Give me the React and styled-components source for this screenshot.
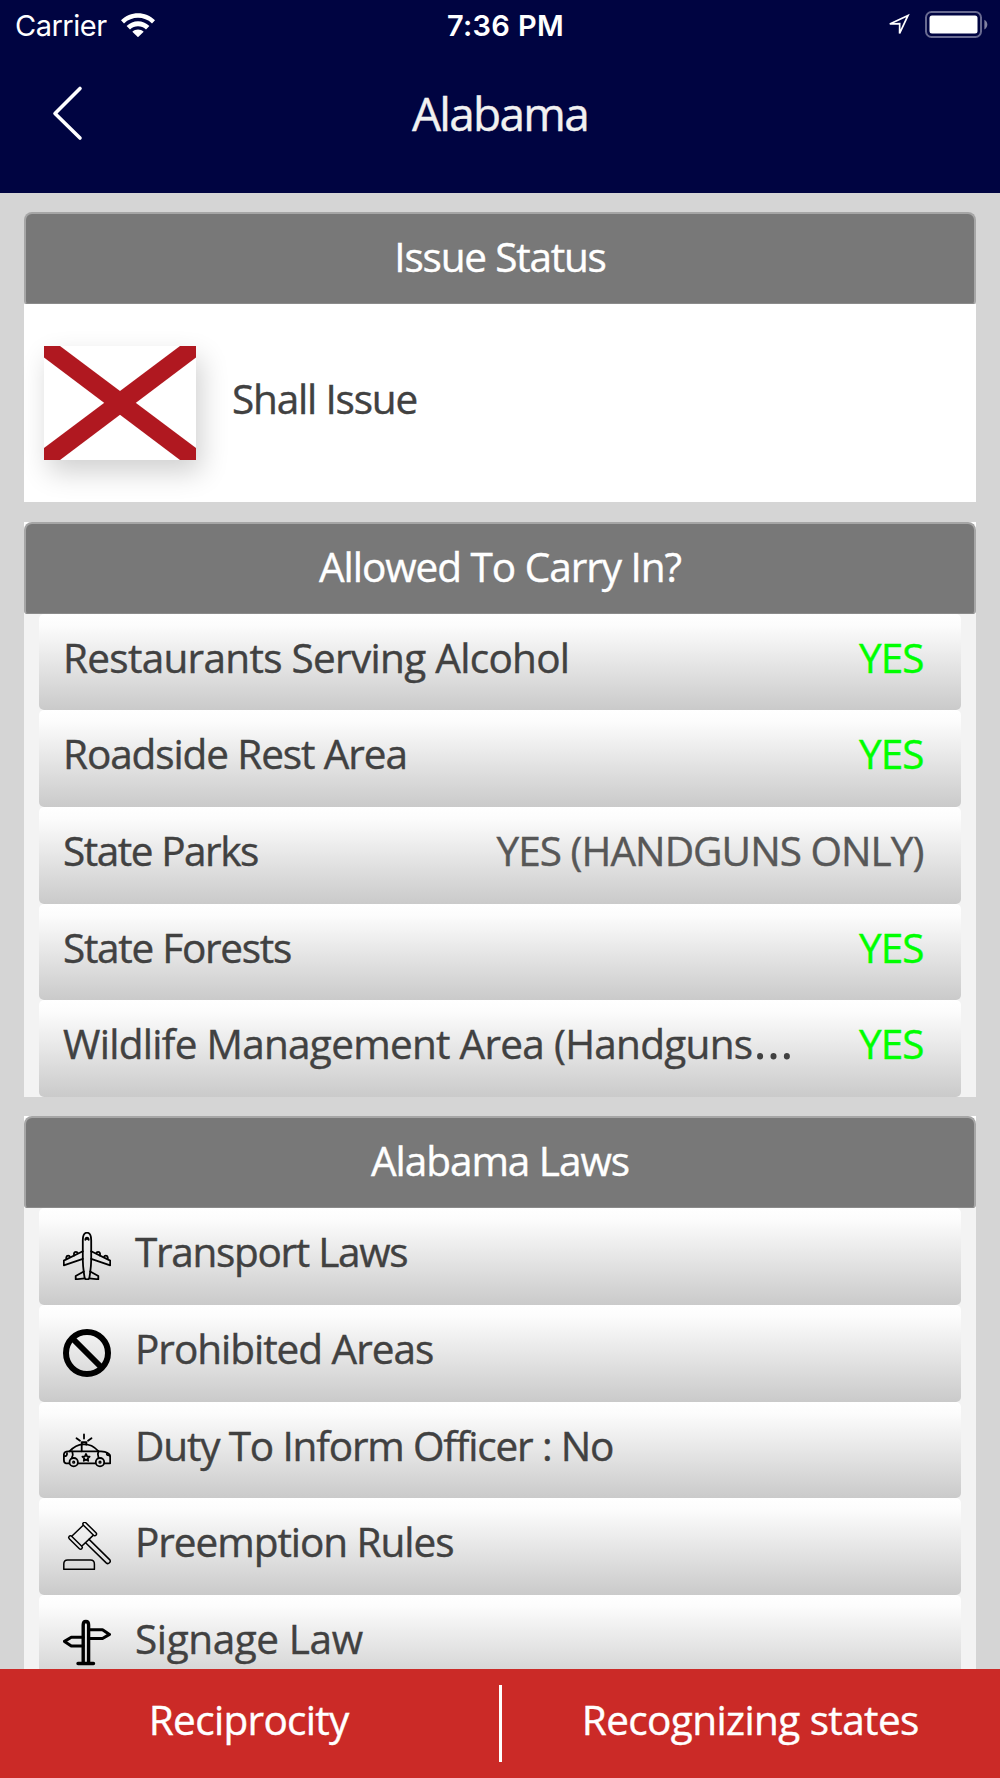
import React from 'react'
import styled, { createGlobalStyle } from 'styled-components'

const GlobalStyle = createGlobalStyle`
  body {
    margin: 0;
    background: #d5d5d5;
  }
  * {
    box-sizing: border-box;
  }
`

const Screen = styled.div`
  display: flex;
  flex-direction: column;
  width: 1000px;
  height: 1778px;
  overflow: hidden;
  background: #d5d5d5;
  font-family: "Open Sans", "Noto Sans", sans-serif;
  font-size: 40.5px;
  color: #414141;
  -webkit-text-stroke: 0.4px currentColor;
`

const Header = styled.header`
  flex: none;
  height: 193px;
  background: #000441;
  color: #fff;
`

const StatusBar = styled.div`
  display: grid;
  grid-template-columns: 1fr auto 1fr;
  align-items: center;
  height: 50px;
  padding: 1px 12px 0 15px;
  font-family: Inter, sans-serif;
  font-size: 29px;
  line-height: 50px;
  -webkit-text-stroke: 0;
`

const Carrier = styled.div`
  display: flex;
  align-items: center;
  gap: 14px;
  letter-spacing: -0.5px;
  svg {
    margin-top: -3px;
  }
`

const Clock = styled.div`
  margin-left: 8px;
  font-weight: 600;
  letter-spacing: 0.35px;
`

const Indicators = styled.div`
  display: flex;
  align-items: center;
  justify-content: flex-end;
  gap: 14px;
  svg {
    margin-top: -2px;
  }
`

const NavBar = styled.div`
  display: grid;
  grid-template-columns: 120px 1fr 120px;
  align-items: center;
  height: 126px;
`

const BackButton = styled.button`
  display: flex;
  margin: 0 0 0 50px;
  padding: 0;
  border: 0;
  background: none;
`

const Title = styled.h1`
  margin: 0;
  font-size: 46px;
  font-weight: 400;
  line-height: 64px;
  letter-spacing: -1.7px;
  text-align: center;
  color: #f1f1f1;
`

const Content = styled.main`
  flex: 1;
  min-height: 0;
  overflow: hidden;
  display: flex;
  flex-direction: column;
  gap: 19.5px;
  padding: 19.4px 24px 0;
`

const Section = styled.section`
  flex: none;
  background: ${props => props.$corner || 'transparent'};
`

const SectionTitle = styled.h2`
  height: 92px;
  margin: 0;
  padding-top: 14px;
  border: 2.5px solid #a6a6a6;
  border-bottom: 1px solid #8b8b8b;
  border-radius: 8px 8px 3px 3px;
  background: #787878;
  color: #fff;
  font-size: 40.5px;
  font-weight: 400;
  line-height: 58px;
  text-align: center;
  letter-spacing: ${props => props.$spacing}px;
`

const Status = styled.div`
  display: flex;
  align-items: center;
  height: 198px;
  padding-left: 19.5px;
  background: #fff;
`

const Flag = styled.svg`
  flex: none;
  width: 152px;
  height: 114px;
  background: #fff;
  box-shadow: 5px 12px 26px rgba(0, 0, 0, 0.19);
`

const StatusText = styled.span`
  margin: -8px 0 0 36.5px;
  line-height: 58px;
  letter-spacing: -1.18px;
`

const List = styled.div`
  padding: 0 15px;
  background: #f3f3f3;
`

const Row = styled.div`
  display: flex;
  height: 96.6px;
  padding: 15px 37.5px 0 23px;
  border-radius: 5px;
  background: linear-gradient(#fff 0%, #fcfcfc 12%, #cacaca 100%);
  line-height: 58px;
  white-space: nowrap;
`

const Label = styled.span`
  flex: 1;
  padding-left: ${props => (props.$plain ? 1 : 0)}px;
  letter-spacing: ${props => props.$spacing}px;
`

const Ellipsis = styled.span`
  margin-left: 1px;
  font-size: 52px;
  line-height: 0;
  -webkit-text-stroke: 0;
`

const Value = styled.span`
  letter-spacing: -0.95px;
  color: ${props => (props.$allowed ? '#00ff00' : '#575757')};
`

const RowIcon = styled.svg`
  flex: none;
  width: 48px;
  height: 48px;
  margin: 9px 24px 0 1px;
  fill: none;
  stroke: #000;
  stroke-width: ${props => props.$weight || 1.8};
  stroke-linecap: round;
  stroke-linejoin: round;
`

const Footer = styled.footer`
  flex: none;
  display: flex;
  align-items: center;
  height: 109px;
  background: #cb2a27;
`

const FooterButton = styled.button`
  flex: 1;
  padding: 0 1px 7px 0;
  border: 0;
  background: none;
  color: #fff;
  font: inherit;
  line-height: 58px;
  letter-spacing: ${props => props.$spacing}px;
  -webkit-text-stroke: 0.4px currentColor;
`

const Divider = styled.div`
  width: 3px;
  height: 77px;
  background: #fff;
`

const WifiIcon = () => (
  <svg width="34" height="24" viewBox="0 0 34 24" fill="#fff">
    <path d="M0 7.200C9-2.200 25-2.200 34 7.200L31 10.400C23 3 11 3 3 10.400z" />
    <path d="M5.600 13c6.500-6.300 16.300-6.300 22.800 0l-3.400 3.400c-4.500-4.200-11.500-4.200-16 0z" />
    <path d="M11.300 18.700c3.300-2.900 8.100-2.900 11.400 0L17 24.200z" />
  </svg>
)

const LocationIcon = () => (
  <svg width="25" height="25" viewBox="0 0 25 25" fill="none" stroke="#fff" strokeWidth="1.7" strokeLinejoin="miter">
    <path d="M22 2.400 3.800 11l9.900-.4L13.600 20.400z" />
  </svg>
)

const BatteryIcon = () => (
  <svg width="63" height="28" viewBox="0 0 63 28">
    <rect x="1" y="1" width="55" height="25" rx="5.5" fill="none" stroke="#686a90" strokeWidth="2" />
    <rect x="4.5" y="4.5" width="48" height="18" rx="2.5" fill="#fff" />
    <path d="M59.4 8.7c3.9 2 3.9 7.8 0 9.8z" fill="#8182a1" />
  </svg>
)

const PlaneIcon = () => (
  <RowIcon viewBox="0 0 48 48">
    <path d="M24 .7c-2.900 0-4.200 3.600-4.200 7.600V28c.1 7 1 12.800 1.900 18.300.5 1.400 4.100 1.400 4.600 0C27.200 40.800 28.100 35 28.200 28V8.300C28.200 4.300 26.900.7 24 .7z" />
    <path d="M22.300 7.800c.2-3 3.200-3 3.400 0M22.300 7.800l1.700-1.400 1.700 1.400" />
    <path d="M19.800 19.300.8 28.600v4.700l19-6.500M28.200 19.300l19 9.300v4.700l-19-6.500" />
    <path d="M3.300 27.200v-2c.5-2 3.300-2 3.700 0M11 23.500v-2.200c.5-2 3.300-2 3.700 0M44.700 27.200v-2c-.5-2-3.300-2-3.700 0M37 23.500v-2.200c-.5-2-3.300-2-3.700 0" />
    <path d="m20.800 39.500-8.100 4.500v3.300l9.200-1M27.200 39.500l8.100 4.500v3.300l-9.200-1" />
  </RowIcon>
)

const ProhibitedIcon = () => (
  <RowIcon viewBox="0 0 48 48" $weight={6}>
    <circle cx="24" cy="24" r="21" />
    <path d="m10 10 28 28" />
  </RowIcon>
)

const PoliceIcon = () => (
  <RowIcon viewBox="0 0 48 48">
    <path d="M21 8.500v4M13.500 12.200l3.500 2.500M28.500 12.200 25 14.700" />
    <path d="M18.800 18.200v-2h4.500v2.200" strokeWidth="2" />
    <path d="M6.500 25.300C10.500 21 15 18.500 20 18.300c7-.3 10.500 2 15.500 7" />
    <path d="M6 37.300H3C1 37 .9 36 .9 34v-5.500C1 26 3 25.300 5.500 25.300H38c6 .3 9.200 2 9.200 6v6h-5.700M15.300 37.300h17" />
    <path d="M18.700 18.500v6.800M9.300 25.500c.8 2.500.8 4-.3 5.700M35.500 25.300c-1 2-1 4 0 6M44 27c-.8 2 .6 2.600 2.800 2.200M1 30.200c2.200.2 3.300-1 3-3" />
    <circle cx="10.700" cy="36.200" r="4.200" />
    <circle cx="37" cy="36.200" r="4.200" />
    <circle cx="10.700" cy="36.200" r=".7" />
    <circle cx="37" cy="36.200" r=".7" />
    <path d="m23 28 1.100 2.300 2.500.3-1.800 1.700.4 2.500-2.200-1.200-2.200 1.200.4-2.500-1.800-1.700 2.500-.3z" />
  </RowIcon>
)

const GavelIcon = () => (
  <RowIcon viewBox="0 0 48 48" $weight={1.5}>
    <path d="M.8 47.300V42c0-2.600 1.500-4 3.800-4h22.800c2.300 0 4 1.400 4 4v5.300z" />
    <rect x="-8.800" y="-1.700" width="17.600" height="3.400" rx="1.700" transform="translate(26.700 7) rotate(44.500)" />
    <rect x="-8.800" y="-1.700" width="17.600" height="3.400" rx="1.700" transform="translate(12.500 20.500) rotate(44.500)" />
    <path d="M19.700 3.700 9 14M29.900 13.600 19.200 23.800" />
    <path d="m26.100 17.400 20.500 20.200c1.900 2.300-1.200 5.200-3.400 3.300L22.600 20.700" />
  </RowIcon>
)

const SignIcon = () => (
  <RowIcon viewBox="0 0 48 48" $weight={3.4}>
    <path d="M20.200 44V6c0-4.700 5.400-4.700 5.400 0v38M15 44.500h15.500" />
    <path d="M26 10.700h13.500l7 4.700-7 4.100H26M20 18.200H8.300l-6.800 4.200 6.800 4.700H20" strokeWidth="3" />
  </RowIcon>
)

const places = [
  { name: 'Restaurants Serving Alcohol', value: 'YES', spacing: -0.7 },
  { name: 'Roadside Rest Area', value: 'YES', spacing: -1.1 },
  { name: 'State Parks', value: 'YES (HANDGUNS ONLY)', spacing: -1.45 },
  { name: 'State Forests', value: 'YES', spacing: -1.26 },
  { name: 'Wildlife Management Area (Handguns', cut: true, value: 'YES', spacing: -0.72 }
]

const laws = [
  { name: 'Transport Laws', icon: PlaneIcon, spacing: -1.3 },
  { name: 'Prohibited Areas', icon: ProhibitedIcon, spacing: -1.02 },
  { name: 'Duty To Inform Officer : No', icon: PoliceIcon, spacing: -1.16 },
  { name: 'Preemption Rules', icon: GavelIcon, spacing: -1.04 },
  { name: 'Signage Law', icon: SignIcon, spacing: -0.4 }
]

const App = () => {
  return (
    <>
      <GlobalStyle />
      <Screen>
        <Header>
          <StatusBar>
            <Carrier>Carrier <WifiIcon /></Carrier>
            <Clock>7:36 PM</Clock>
            <Indicators>
              <LocationIcon />
              <BatteryIcon />
            </Indicators>
          </StatusBar>
          <NavBar>
            <BackButton aria-label="Back">
              <svg width="34" height="56" viewBox="0 0 34 56" fill="none" stroke="#fff" strokeWidth="3.6" strokeLinecap="round" strokeLinejoin="round">
                <path d="M30 3.500 5 28.500l25 24.500" />
              </svg>
            </BackButton>
            <Title>Alabama</Title>
          </NavBar>
        </Header>
        <Content>
          <Section>
            <SectionTitle $spacing={-1.2}>Issue Status</SectionTitle>
            <Status>
              <Flag viewBox="0 0 152 114" fill="#b01820">
                <path d="M0 0h16l136 102v12h-16L0 11.500z" />
                <path d="M152 0h-16L0 102v12h16L152 11.500z" />
              </Flag>
              <StatusText>Shall Issue</StatusText>
            </Status>
          </Section>
          <Section $corner="#fff">
            <SectionTitle $spacing={-1.02}>Allowed To Carry In?</SectionTitle>
            <List>
              {places.map(place => (
                <Row key={place.name}>
                  <Label $plain $spacing={place.spacing}>
                    {place.name}{place.cut && <Ellipsis>…</Ellipsis>}
                  </Label>
                  <Value $allowed={place.value === 'YES'}>{place.value}</Value>
                </Row>
              ))}
            </List>
          </Section>
          <Section $corner="#fff">
            <SectionTitle $spacing={-1.02}>Alabama Laws</SectionTitle>
            <List>
              {laws.map(({ name, icon: Icon, spacing }) => (
                <Row key={name}>
                  <Icon />
                  <Label $spacing={spacing}>{name}</Label>
                </Row>
              ))}
            </List>
          </Section>
        </Content>
        <Footer>
          <FooterButton $spacing={-0.68}>Reciprocity</FooterButton>
          <Divider />
          <FooterButton $spacing={-0.6}>Recognizing states</FooterButton>
        </Footer>
      </Screen>
    </>
  )
}

export default App
